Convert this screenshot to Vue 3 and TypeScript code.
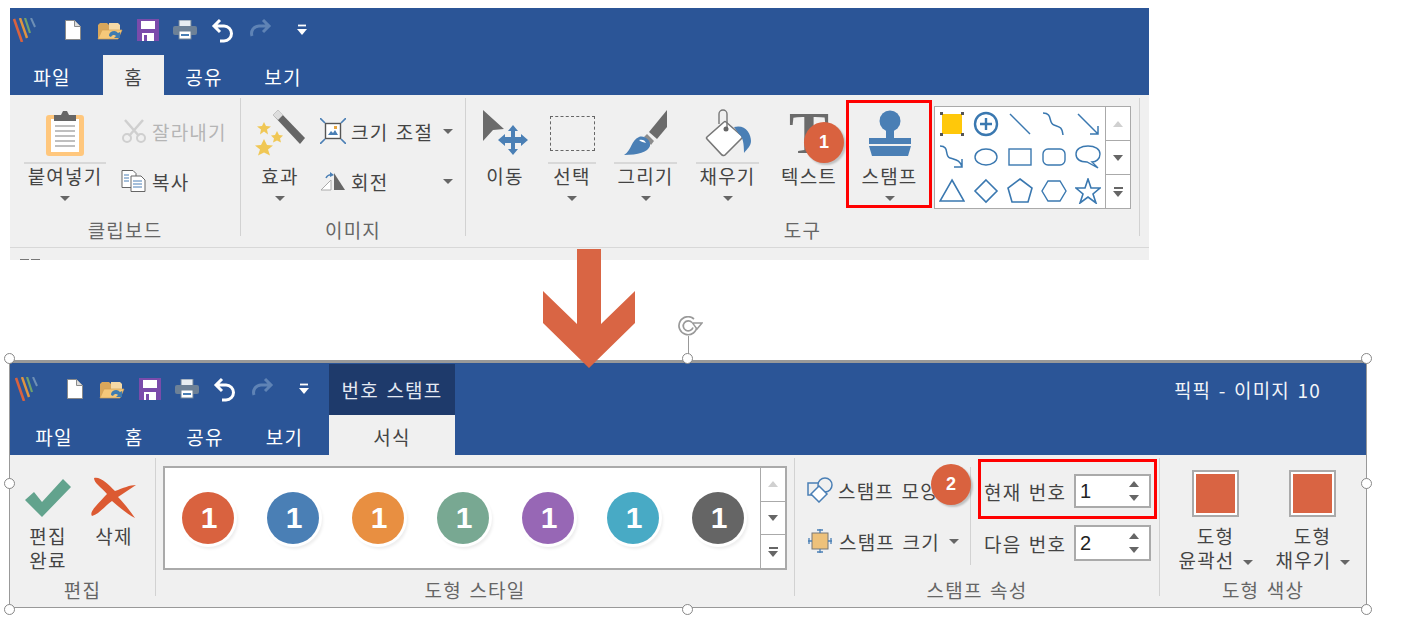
<script setup lang="ts">
const gallery = [
  's-sel', 's-plus', 's-line', 's-curve', 's-arrow',
  's-curvearrow', 's-ellipse', 's-rect', 's-round', 's-callout',
  's-tri', 's-diamond', 's-penta', 's-hexa', 's-star',
];
const stamps = ['#d9623f', '#4a7fb5', '#e88f41', '#78a892', '#9767b5', '#48aac5', '#656565'];
const quick = [
  { id: 'i-new', w: 18, h: 20 },
  { id: 'i-open', w: 26, h: 20 },
  { id: 'i-save', w: 22, h: 22 },
  { id: 'i-print', w: 24, h: 20 },
  { id: 'i-undo', w: 23, h: 25 },
  { id: 'i-redo', w: 23, h: 25 },
];
</script>

<template>
  <div class="page">
    <svg class="defs" width="0" height="0">
      <defs>
        <symbol id="i-logo" viewBox="0 0 24 24">
          <path d="M1 1l8 23" stroke="#d9623f" stroke-width="2.6" fill="none" />
          <path d="M7 0l7 20" stroke="#e0943f" stroke-width="2.4" fill="none" />
          <path d="M12 0l5 15" stroke="#6fa26c" stroke-width="2.2" fill="none" />
          <path d="M18 0l4 9" stroke="#6e8fb5" stroke-width="2" fill="none" />
        </symbol>
        <symbol id="i-new" viewBox="0 0 18 20">
          <path d="M1.5 .5h9l6 6v13h-15z" fill="#fff" stroke="#8a8a8a" />
          <path d="M10.5 .5v6h6" fill="#ddd" stroke="#8a8a8a" />
        </symbol>
        <symbol id="i-open" viewBox="0 0 26 20">
          <path d="M1 19V5l2-2h7l2 2h5v14z" fill="#d9a75b" />
          <path d="M12 3h9l2 2v6H12z" fill="#f5d9a6" />
          <path d="M1 19l4-9h20l-4 9z" fill="#f5c87a" stroke="#d2a055" stroke-width=".7" />
          <path d="M12 16a5 5 0 0 1 9-3l2-1v6h-6l2-2a3 3 0 0 0-5 1z" fill="#3f7cb0" />
        </symbol>
        <symbol id="i-save" viewBox="0 0 22 22">
          <rect width="22" height="22" fill="#7a4bab" />
          <rect x="4" y="2" width="14" height="8" fill="#fff" />
          <rect x="5" y="14" width="12" height="8" fill="#fff" />
          <rect x="7" y="16" width="3" height="6" fill="#7a4bab" />
        </symbol>
        <symbol id="i-print" viewBox="0 0 24 20">
          <rect x="6" y="0" width="12" height="7" fill="#e8edf2" stroke="#6d8197" />
          <rect x="0" y="6" width="24" height="9" rx="2" fill="#6d8197" />
          <rect x="6" y="11" width="12" height="8" fill="#fff" stroke="#6d8197" />
          <path d="M8 15h8" stroke="#4a7fb5" stroke-width="2" />
        </symbol>
        <symbol id="i-undo" viewBox="0 0 23 25">
          <path d="M9 2L3 8l6 6M3 8h10a7.500 7.500 0 0 1 0 15H9" fill="none" stroke="#fff" stroke-width="3" />
        </symbol>
        <symbol id="i-redo" viewBox="0 0 23 25">
          <path d="M14 2l6 6-6 6M20 8H10a7.500 7.500 0 0 0-7 10" fill="none" stroke="#5f83b5" stroke-width="3" />
        </symbol>
        <symbol id="i-drop" viewBox="0 0 10 12">
          <path d="M1 1.500h8" stroke="#fff" stroke-width="1.800" />
          <path d="M0 5h10l-5 6z" fill="#fff" />
        </symbol>
        <symbol id="i-paste" viewBox="0 0 38 46">
          <rect x="0" y="5" width="38" height="41" rx="3" fill="#ffc77d" />
          <rect x="5" y="9" width="28" height="33" fill="#fff" />
          <path d="M9 16h20M9 21h20M9 26h20M9 31h20M9 36h20" stroke="#aaa" stroke-width="1.400" />
          <path d="M8 11V5h7l2-4h4l2 4h7v6z" fill="#666" />
        </symbol>
        <symbol id="i-scissors" viewBox="0 0 24 24">
          <path d="M3 1l14 16M21 1L7 17" stroke="#cfcfcf" stroke-width="2.500" fill="none" />
          <circle cx="5" cy="19" r="4" fill="none" stroke="#cfcfcf" stroke-width="2" />
          <circle cx="19" cy="19" r="4" fill="none" stroke="#cfcfcf" stroke-width="2" />
        </symbol>
        <symbol id="i-copy" viewBox="0 0 25 22">
          <path d="M1 .5h11l3 3v14H1z" fill="#fff" stroke="#666" />
          <path d="M10 6h10l4 4v11.500H10z" fill="#fff" stroke="#666" />
          <path d="M3 5h5M3 8h5M3 11h5M12 11h9M12 14h9M12 17h9" stroke="#4a7fb5" />
        </symbol>
        <symbol id="i-effect" viewBox="0 0 50 48">
          <path d="M18 6l5-5 27 28-5 6z" fill="#666" />
          <path d="M18 6l5-5 5 5-5 5z" fill="#ddd" />
          <path d="M9 13l2 4 5 .5-4 3 1 5-4-3-4 3 1-5-4-3 5-.5zM22 22l2 4 4 .5-3 3 1 4-4-2-4 2 1-4-3-3 4-.5zM9 30l3 6 6 .5-5 4 2 6-6-3-6 3 2-6-5-4 6-.5z" fill="#f0c755" />
        </symbol>
        <symbol id="i-resize" viewBox="0 0 26 26">
          <rect x="5.500" y="5.500" width="15" height="15" fill="#fff" stroke="#555" stroke-width="1.400" />
          <path d="M8 17l3-4 2 2 2-3 3 5z" fill="#4a7fb5" />
          <rect x="14" y="8" width="3" height="3" fill="#e8a53f" />
          <path d="M0 0l5 5M26 0l-5 5M0 26l5-5M26 26l-5-5" stroke="#4a7fb5" stroke-width="1.600" />
        </symbol>
        <symbol id="i-rotate" viewBox="0 0 26 20">
          <path d="M1 19L11 9v10z" fill="#fff" stroke="#aaa" />
          <path d="M14 19V2l11 17z" fill="#666" />
          <path d="M6 7a5 5 0 0 1 6-3" fill="none" stroke="#4a7fb5" stroke-width="1.500" />
          <path d="M10 1l4 3-4 2z" fill="#4a7fb5" />
        </symbol>
        <symbol id="i-move" viewBox="0 0 50 46">
          <path d="M3 0l21 19-11 1-10 11z" fill="#6b6b6b" />
          <path d="M33 15l5 6h-3v6h6v-3l7 6-7 6v-3h-6v6h3l-5 6-5-6h3v-6h-6v3l-7-6 7-6v3h6v-6h-3z" fill="#4a7fb5" />
        </symbol>
        <symbol id="i-brush" viewBox="0 0 44 46">
          <path d="M43 0v17L33 29l-8-7z" fill="#6b6b6b" />
          <path d="M23 24l7 7-3 4-7-8z" fill="#8c8c8c" />
          <path d="M0 45c8-5 7-15 15-18 5-2 12 3 11 9-2 6-12 9-26 9z" fill="#4a7fb5" />
          <path d="M15 30c3-1 6 0 7 3-2-1-5-1-7-3z" fill="#fff" />
        </symbol>
        <symbol id="i-fill" viewBox="0 0 46 48">
          <path d="M19 13L2 28q-1 1 0 2l15 16q2 1 3 0l17-17q1-1 0-2L21 13q-1-1-2 0z" fill="#fff" stroke="#777" stroke-width="1.600" />
          <path d="M14 15V5a4 4 0 0 1 8 0v15" fill="none" stroke="#777" stroke-width="1.400" />
          <circle cx="21" cy="20" r="2.500" fill="#666" />
          <path d="M29 18c11-3 17 6 17 14 0 5-4 8-7 12 0-9-1-16-5-19z" fill="#4a7fb5" />
        </symbol>
        <symbol id="i-stamp" viewBox="0 0 44 46">
          <circle cx="22" cy="11" r="10.500" fill="#4a7fb5" />
          <rect x="18" y="18" width="8" height="12" fill="#4a7fb5" />
          <rect x="1" y="28" width="42" height="6" fill="#4a7fb5" />
          <path d="M1 36h42l-3 10H4z" fill="#4a7fb5" />
        </symbol>
        <symbol id="i-check" viewBox="0 0 46 38">
          <path d="M0 21l9-8 8 10L38 0l8 8-29 30z" fill="#62a38d" />
        </symbol>
        <symbol id="i-cross" viewBox="0 0 46 42">
          <path d="M3 1c6-2 14 6 21 13 8-3 15-6 21-6-6 4-12 8-18 12 6 6 12 14 17 21-8-4-16-11-23-17C14 29 8 37 1 39c-3-4 4-10 15-22C10 10 3 6 3 1z" fill="#dc5a32" />
        </symbol>
        <symbol id="i-shape" viewBox="0 0 26 26">
          <path d="M12 6H1v12h5" fill="none" stroke="#4a7fb5" stroke-width="1.500" />
          <circle cx="18" cy="8" r="7" fill="none" stroke="#4a7fb5" stroke-width="1.500" />
          <path d="M12 9l8 8-8 8-8-8z" fill="#fff" stroke="#4a7fb5" stroke-width="1.500" />
        </symbol>
        <symbol id="i-size" viewBox="0 0 24 24">
          <rect x="4" y="4" width="16" height="16" fill="#eec17a" stroke="#777" />
          <path d="M12 0v4M12 20v4M0 12h4M20 12h4M9 1h6M9 23h6M1 9v6M23 9v6" stroke="#4a7fb5" stroke-width="1.300" />
        </symbol>

        <symbol id="s-sel" viewBox="0 0 26 26">
          <rect x="3" y="3" width="20" height="20" fill="#ffc80a" />
          <path d="M1 1h3v3H1zM22 1h3v3h-3zM1 22h3v3H1zM22 22h3v3h-3z" fill="#555" />
        </symbol>
        <symbol id="s-plus" viewBox="0 0 26 26">
          <circle cx="13" cy="13" r="11" fill="none" stroke="#3a78b0" stroke-width="2.400" />
          <path d="M13 7v12M7 13h12" stroke="#3a78b0" stroke-width="2.400" />
        </symbol>
        <symbol id="s-line" viewBox="0 0 26 26"><path d="M3 3l20 20" stroke="#3a78b0" stroke-width="1.500" /></symbol>
        <symbol id="s-curve" viewBox="0 0 26 26"><path d="M2 2c10 0 5 10 11 12s8 2 9 10" fill="none" stroke="#3a78b0" stroke-width="1.500" /></symbol>
        <symbol id="s-arrow" viewBox="0 0 26 26"><path d="M3 3l20 20M23 15v8h-8" fill="none" stroke="#3a78b0" stroke-width="1.500" /></symbol>
        <symbol id="s-curvearrow" viewBox="0 0 26 26"><path d="M1 2c10 0 4 10 10 12s10 2 12 9M23 15v8h-8" fill="none" stroke="#3a78b0" stroke-width="1.500" /></symbol>
        <symbol id="s-ellipse" viewBox="0 0 26 26"><ellipse cx="13" cy="13" rx="11" ry="8" fill="none" stroke="#3a78b0" stroke-width="1.400" /></symbol>
        <symbol id="s-rect" viewBox="0 0 26 26"><rect x="2" y="5" width="22" height="16" fill="none" stroke="#3a78b0" stroke-width="1.400" /></symbol>
        <symbol id="s-round" viewBox="0 0 26 26"><rect x="2" y="5" width="22" height="16" rx="5" fill="none" stroke="#3a78b0" stroke-width="1.400" /></symbol>
        <symbol id="s-callout" viewBox="0 0 26 26"><path d="M13 2c7 0 12 3 12 8s-4 8-8 8l6 6-11-6C5 18 1 15 1 10s5-8 12-8z" fill="none" stroke="#3a78b0" stroke-width="1.400" /></symbol>
        <symbol id="s-tri" viewBox="0 0 26 26"><path d="M13 2l12 21H1z" fill="none" stroke="#3a78b0" stroke-width="1.600" /></symbol>
        <symbol id="s-diamond" viewBox="0 0 26 26"><path d="M13 2l11 11-11 11L2 13z" fill="none" stroke="#3a78b0" stroke-width="1.600" /></symbol>
        <symbol id="s-penta" viewBox="0 0 26 26"><path d="M13 1l12 9-4 14H5L1 10z" fill="none" stroke="#3a78b0" stroke-width="1.600" /></symbol>
        <symbol id="s-hexa" viewBox="0 0 26 26"><path d="M7 3h12l6 10-6 10H7L1 13z" fill="none" stroke="#3a78b0" stroke-width="1.400" /></symbol>
        <symbol id="s-star" viewBox="0 0 26 26"><path d="M13 1l3 9h9l-7 6 3 9-8-6-8 6 3-9-7-6h9z" fill="none" stroke="#3a78b0" stroke-width="1.600" /></symbol>
      </defs>
    </svg>

    <!-- 위쪽 리본 -->
    <section class="ribbon top">
      <div class="titlebar top-title">
        <div class="qat">
          <svg class="logo" width="24" height="24"><use href="#i-logo" /></svg>
          <span v-for="q in quick" :key="q.id" class="qat-slot">
            <svg :width="q.w" :height="q.h"><use :href="'#' + q.id" /></svg>
          </span>
          <span class="qat-drop"><svg width="10" height="12"><use href="#i-drop" /></svg></span>
        </div>
      </div>
      <div class="tabs">
        <span class="tab t-a">파일</span>
        <span class="tab t-b active">홈</span>
        <span class="tab t-c">공유</span>
        <span class="tab t-d">보기</span>
      </div>
      <div class="body">
        <div class="group g-clip">
          <div class="content">
            <div class="tool w-paste">
              <span class="tool-icon"><svg width="38" height="46"><use href="#i-paste" /></svg></span>
              <span class="rule"></span>
              <span class="tool-label">붙여넣기</span>
              <i class="caret"></i>
            </div>
            <div class="small-col clip-col">
              <div class="small-row disabled">
                <svg class="scissors" width="24" height="24"><use href="#i-scissors" /></svg><span>잘라내기</span>
              </div>
              <div class="small-row">
                <svg width="25" height="22"><use href="#i-copy" /></svg><span>복사</span>
              </div>
            </div>
          </div>
          <div class="group-label">클립보드</div>
        </div>
        <span class="sep"></span>
        <div class="group g-image">
          <div class="content">
            <div class="tool w-effect">
              <span class="tool-icon"><svg width="50" height="48"><use href="#i-effect" /></svg></span>
              <span class="rule none"></span>
              <span class="tool-label">효과</span>
              <i class="caret"></i>
            </div>
            <div class="small-col image-col">
              <div class="small-row">
                <svg width="26" height="26"><use href="#i-resize" /></svg><span>크기 조절</span><i class="caret end"></i>
              </div>
              <div class="small-row">
                <svg width="26" height="20"><use href="#i-rotate" /></svg><span>회전</span><i class="caret end"></i>
              </div>
            </div>
          </div>
          <div class="group-label">이미지</div>
        </div>
        <span class="sep"></span>
        <div class="group g-tools">
          <div class="content">
            <div class="tool w-move">
              <span class="tool-icon"><svg width="50" height="46"><use href="#i-move" /></svg></span>
              <span class="rule none"></span>
              <span class="tool-label">이동</span>
            </div>
            <div class="tool w-select">
              <span class="tool-icon"><span class="dashed"></span></span>
              <span class="rule"></span>
              <span class="tool-label">선택</span>
              <i class="caret"></i>
            </div>
            <div class="tool w-draw">
              <span class="tool-icon"><svg width="44" height="46"><use href="#i-brush" /></svg></span>
              <span class="rule"></span>
              <span class="tool-label">그리기</span>
              <i class="caret"></i>
            </div>
            <div class="tool w-fill">
              <span class="tool-icon"><svg width="46" height="48"><use href="#i-fill" /></svg></span>
              <span class="rule"></span>
              <span class="tool-label">채우기</span>
              <i class="caret"></i>
            </div>
            <div class="tool w-text">
              <span class="tool-icon t-glyph">T</span>
              <span class="rule none"></span>
              <span class="tool-label">텍스트</span>
              <span class="badge one">1</span>
            </div>
            <div class="tool w-stamp">
              <span class="tool-icon"><svg width="44" height="46"><use href="#i-stamp" /></svg></span>
              <span class="rule none"></span>
              <span class="tool-label">스탬프</span>
              <i class="caret"></i>
              <span class="redbox stamp-box"></span>
            </div>
            <div class="shape-gallery">
              <div class="shape-grid">
                <span v-for="s in gallery" :key="s" class="shape-cell">
                  <svg width="26" height="26"><use :href="'#' + s" /></svg>
                </span>
              </div>
              <div class="scroller">
                <span><i class="up"></i></span>
                <span><i class="down"></i></span>
                <span><b></b><i class="down"></i></span>
              </div>
            </div>
          </div>
          <div class="group-label">도구</div>
        </div>
        <span class="sep"></span>
      </div>
      <div class="statusbar"><span></span><span></span></div>
    </section>

    <svg class="big-arrow" width="94" height="122" viewBox="0 0 94 122">
      <path d="M34 2h24v75l34-33v32l-46 45L0 76V44l34 33z" fill="#d96544" />
    </svg>

    <!-- 아래쪽 리본 (선택된 이미지) -->
    <section class="selection">
      <div class="rotate-handle">
        <svg width="30" height="20" viewBox="0 0 30 20">
          <path d="M21 3a9 9 0 1 0 3 7" fill="none" stroke="#999" stroke-width="1.700" />
          <path d="M19 6.500a5 5 0 1 0 1 5" fill="none" stroke="#999" stroke-width="1.700" />
          <path d="M19.500 7h9.500l-5 6z" fill="#fff" stroke="#999" stroke-width="1.400" />
        </svg>
        <span></span>
      </div>
      <i class="handle h-tl"></i><i class="handle h-tc"></i><i class="handle h-tr"></i>
      <i class="handle h-ml"></i><i class="handle h-mr"></i>
      <i class="handle h-bl"></i><i class="handle h-bc"></i><i class="handle h-br"></i>

      <div class="ribbon">
        <div class="titlebar bottom-title">
          <div class="qat second">
            <svg class="logo" width="24" height="24"><use href="#i-logo" /></svg>
            <span v-for="q in quick" :key="q.id" class="qat-slot">
              <svg :width="q.w" :height="q.h"><use :href="'#' + q.id" /></svg>
            </span>
            <span class="qat-drop"><svg width="10" height="12"><use href="#i-drop" /></svg></span>
          </div>
          <div class="context">번호 스탬프</div>
          <div class="doc-title">픽픽 - 이미지 10</div>
        </div>
        <div class="tabs">
          <span class="tab b-a">파일</span>
          <span class="tab b-b">홈</span>
          <span class="tab b-c">공유</span>
          <span class="tab b-d">보기</span>
          <span class="tab b-e active">서식</span>
        </div>
        <div class="body">
          <div class="group g-edit">
            <div class="content">
              <div class="tool tight w-done">
                <span class="edit-icon"><svg width="46" height="38"><use href="#i-check" /></svg></span>
                <span class="tool-label">편집<br />완료</span>
              </div>
              <div class="tool tight w-del">
                <span class="edit-icon"><svg width="46" height="42"><use href="#i-cross" /></svg></span>
                <span class="tool-label">삭제</span>
              </div>
            </div>
            <div class="group-label">편집</div>
          </div>
          <span class="sep"></span>
          <div class="group g-style">
            <div class="content">
              <div class="stamp-gallery">
                <div class="stamp-row">
                  <span v-for="c in stamps" :key="c" class="stamp-cell">
                    <span class="stamp-dot" :style="{ background: c }">1</span>
                  </span>
                </div>
                <div class="scroller">
                  <span><i class="up"></i></span>
                  <span><i class="down"></i></span>
                  <span><b></b><i class="down"></i></span>
                </div>
              </div>
            </div>
            <div class="group-label">도형 스타일</div>
          </div>
          <span class="sep"></span>
          <div class="group g-prop">
            <div class="content">
              <div class="small-col prop-col">
                <div class="small-row">
                  <svg width="26" height="26"><use href="#i-shape" /></svg><span>스탬프 모양</span>
                </div>
                <div class="small-row">
                  <svg class="size-icon" width="24" height="24"><use href="#i-size" /></svg><span>스탬프 크기</span><i class="caret end"></i>
                </div>
              </div>
              <span class="inner-sep"></span>
              <div class="number-col">
                <div class="number-row first">
                  <span class="num-label">현재 번호</span>
                  <div class="spin"><span>1</span><em><i class="up dark"></i><i class="down"></i></em></div>
                </div>
                <div class="number-row second">
                  <span class="num-label">다음 번호</span>
                  <div class="spin"><span>2</span><em><i class="up dark"></i><i class="down"></i></em></div>
                </div>
                <span class="redbox number-box"></span>
              </div>
              <span class="badge two">2</span>
            </div>
            <div class="group-label">스탬프 속성</div>
          </div>
          <span class="sep"></span>
          <div class="group g-color">
            <div class="content">
              <div class="color-item">
                <span class="swatch"></span>
                <span class="tool-label">도형<br />윤곽선<i class="caret inline"></i></span>
              </div>
              <div class="color-item">
                <span class="swatch"></span>
                <span class="tool-label">도형<br />채우기<i class="caret inline"></i></span>
              </div>
            </div>
            <div class="group-label">도형 색상</div>
          </div>
        </div>
      </div>
    </section>
  </div>
</template>

<style scoped>
.page {
  position: relative;
  width: 1417px;
  height: 618px;
  padding: 8px 0 0 10px;
  box-sizing: border-box;
  overflow: hidden;
  background: #fff;
  font-family: "Noto Sans CJK KR", "Liberation Sans", sans-serif;
  font-size: 19px;
  letter-spacing: 1.200px;
  word-spacing: 2px;
  color: #444;
}
.defs {
  position: absolute;
}
.ribbon {
  display: flex;
  flex-direction: column;
  background: #f0f0f0;
}
.ribbon.top {
  width: 1139px;
  height: 252px;
}

/* title bar */
.titlebar {
  display: flex;
  align-items: center;
  background: #2b5597;
}
.top-title {
  height: 47px;
  padding-bottom: 3px;
  box-sizing: border-box;
}
.bottom-title {
  height: 52px;
  align-items: stretch;
}
.qat {
  display: flex;
  align-items: center;
  width: 319px;
  padding-left: 3px;
  box-sizing: border-box;
}
.qat.second {
  padding-left: 5px;
}
.logo {
  margin-right: 17px;
}
.qat-slot {
  display: flex;
  justify-content: center;
  width: 37.5px;
}
.qat-drop {
  display: flex;
  margin-left: 18px;
}
.context {
  display: flex;
  align-items: center;
  justify-content: center;
  width: 126px;
  margin-top: 1px;
  color: #e4e9f2;
  background: #1e3a6b;
}
.doc-title {
  align-self: center;
  margin-left: auto;
  padding-right: 45px;
  color: #f2f4f8;
}

/* tabs */
.tabs {
  display: flex;
  height: 40px;
  background: #2b5597;
}
.tab {
  display: flex;
  align-items: center;
  justify-content: center;
  padding-top: 3px;
  box-sizing: border-box;
  color: #fff;
}
.tab.active {
  color: #444;
  background: #f0f0f0;
}
.t-a { width: 84px; margin-right: 9px; }
.t-b { width: 61px; }
.t-c { width: 80px; }
.t-d { width: 78px; }
.b-a { width: 88px; }
.b-b { width: 72px; }
.b-c { width: 70px; }
.b-d { width: 89px; }
.b-e { width: 126px; }

/* groups */
.body {
  display: flex;
  height: 152px;
  flex: none;
}
.group {
  display: flex;
  flex-direction: column;
  flex: none;
}
.content {
  position: relative;
  display: flex;
  height: 125px;
}
.group-label {
  height: 20px;
  line-height: 20px;
  text-align: center;
  color: #666;
}
.sep {
  flex: none;
  width: 1px;
  margin: 3px 0 11px;
  background: #d2d2d2;
}
.g-clip { width: 230px; }
.g-image { width: 224px; }
.g-tools { width: 673px; }
.g-edit { width: 145px; }
.g-style { width: 638px; }
.g-prop { width: 364px; }
.g-color { width: 206px; }
.g-clip .content { padding-left: 14px; }
.g-image .content { padding-left: 9px; }
.g-tools .content { padding-left: 9px; }

/* big buttons */
.tool {
  position: relative;
  display: flex;
  flex-direction: column;
  align-items: center;
  flex: none;
  padding-top: 12px;
  box-sizing: border-box;
}
.tool-icon {
  display: flex;
  align-items: center;
  justify-content: center;
  height: 52px;
}
.rule {
  align-self: stretch;
  height: 2px;
  margin-top: 3px;
  background: #d8d8d8;
}
.rule.none {
  background: transparent;
}
.tool-label {
  line-height: 24px;
  text-align: center;
  white-space: nowrap;
}
.caret {
  display: block;
  width: 0;
  height: 0;
  margin-top: 8px;
  border: 5px solid transparent;
  border-top: 5px solid #666;
  border-bottom: 0;
}
.caret.end {
  margin: 0 0 0 auto;
}
.prop-col .caret.end {
  margin-right: 6px;
}
.caret.inline {
  display: inline-block;
  margin: 0 0 3px 8px;
}
.w-paste { width: 82px; }
.w-effect { width: 60px; }
.w-move { width: 60px; }
.w-select { width: 48px; margin-left: 13px; }
.w-draw { width: 63px; margin-left: 18px; }
.w-fill { width: 63px; margin-left: 19px; }
.w-text { width: 60px; margin-left: 20px; }
.w-stamp { width: 85px; margin-left: 8px; }
.dashed {
  width: 43px;
  height: 33px;
  border: 1px dashed #666;
}
.t-glyph {
  font-family: "Liberation Serif", serif;
  font-size: 60px;
  line-height: 50px;
  font-weight: 700;
  letter-spacing: 0;
  color: #6b6b6b;
}

/* small buttons */
.small-col {
  display: flex;
  flex-direction: column;
  gap: 20px;
  padding-top: 21px;
}
.small-row {
  display: flex;
  align-items: center;
  gap: 5px;
  height: 30px;
  white-space: nowrap;
}
.small-row.disabled {
  color: #b5b5b5;
}
.clip-col { margin-left: 15px; }
.clip-col .small-row { gap: 6px; }
.scissors { margin-left: 1px; }
.size-icon { margin: 0 2px 0 1px; }
.image-col { width: 133px; margin-left: 10px; }
.prop-col { width: 158px; }

/* shape gallery */
.shape-gallery {
  display: flex;
  width: 197px;
  height: 103px;
  margin: 11px 0 0 2px;
  border: 1px solid #aaa;
  box-sizing: border-box;
  background: #fff;
}
.shape-grid {
  display: grid;
  grid-template-columns: repeat(5, 1fr);
  flex: 1;
}
.shape-cell {
  display: flex;
  align-items: center;
  justify-content: center;
}
.scroller {
  display: flex;
  flex-direction: column;
  flex: none;
  width: 24px;
  border-left: 1px solid #aaa;
}
.scroller span {
  display: flex;
  flex: 1;
  flex-direction: column;
  align-items: center;
  justify-content: center;
  gap: 2px;
}
.scroller span + span {
  border-top: 1px solid #aaa;
}
.scroller b {
  width: 9px;
  height: 2px;
  background: #666;
}
.up, .down {
  display: block;
  width: 0;
  height: 0;
  border-left: 5px solid transparent;
  border-right: 5px solid transparent;
}
.up {
  border-bottom: 6px solid #d0d0d0;
}
.up.dark {
  border-bottom-color: #666;
}
.down {
  border-top: 6px solid #666;
}

/* annotations */
.badge {
  position: absolute;
  display: flex;
  align-items: center;
  justify-content: center;
  width: 40px;
  height: 41px;
  border-radius: 50%;
  font-family: "Liberation Sans", sans-serif;
  font-size: 18px;
  font-weight: 700;
  letter-spacing: 0;
  color: #fff;
  background: #d9623f;
  box-shadow: 2px 2px 2px rgba(0, 0, 0, .2);
}
.badge.one {
  top: 27px;
  left: 25px;
}
.badge.two {
  top: 9px;
  left: 136px;
}
.redbox {
  position: absolute;
  border: 3px solid #f00;
  box-sizing: border-box;
  pointer-events: none;
}
.stamp-box {
  inset: 5px 0 auto -1px;
  height: 108px;
}
.number-box {
  top: 4px;
  left: -6px;
  width: 179px;
  height: 60px;
}
.big-arrow {
  position: absolute;
  top: 247px;
  left: 543px;
  z-index: 3;
}

/* selection frame */
.selection {
  position: relative;
  width: 1358px;
  height: 248px;
  margin: 100px 0 0 -1px;
  border: 1px solid #999;
  border-top-width: 3px;
  box-sizing: border-box;
}
.handle {
  position: absolute;
  z-index: 2;
  width: 9px;
  height: 9px;
  border: 1.500px solid #888;
  border-radius: 50%;
  background: #fff;
}
.h-tl { top: -10px; left: -6px; }
.h-tc { top: -10px; left: 672px; }
.h-tr { top: -10px; right: -6px; }
.h-ml { top: 115px; left: -6px; }
.h-mr { top: 115px; right: -6px; }
.h-bl { bottom: -8px; left: -6px; }
.h-bc { bottom: -8px; left: 672px; }
.h-br { bottom: -8px; right: -6px; }
.rotate-handle {
  position: absolute;
  top: -47px;
  left: 663px;
  display: flex;
  flex-direction: column;
  align-items: center;
  width: 30px;
}
.rotate-handle svg {
  flex: none;
}
.rotate-handle span {
  width: 1px;
  height: 20px;
  background: #999;
}

/* lower ribbon */
.g-edit .content { padding-left: 8px; }
.tool.tight { padding-top: 16px; }
.edit-icon {
  display: flex;
  align-items: center;
  justify-content: center;
  height: 53px;
}
.w-done { width: 60px; }
.w-del { width: 60px; margin-left: 6px; }
.stamp-gallery {
  display: flex;
  width: 624px;
  height: 104px;
  margin: 11px 0 0 7px;
  border: 2px solid #aaa;
  box-sizing: border-box;
  background: #fff;
}
.stamp-row {
  display: flex;
  flex: 1;
}
.stamp-cell {
  display: flex;
  flex: 1;
  align-items: center;
  justify-content: center;
}
.stamp-dot {
  display: flex;
  align-items: center;
  justify-content: center;
  width: 52px;
  height: 52px;
  padding-left: 3px;
  box-sizing: border-box;
  border-radius: 50%;
  font-family: "Liberation Sans", sans-serif;
  font-size: 30px;
  font-weight: 700;
  letter-spacing: 0;
  color: #fff;
  box-shadow: 0 0 0 3px #fff, 2px 3px 3px 2px rgba(0, 0, 0, .07);
}
.g-prop .content { padding-left: 12px; }
.prop-col { padding-top: 20px; gap: 21px; }
.inner-sep {
  flex: none;
  width: 1px;
  height: 98px;
  margin: 12px 0 0 5px;
  background: #d2d2d2;
}
.number-col {
  position: relative;
  display: flex;
  flex-direction: column;
  gap: 17px;
  margin-left: 13px;
  padding-top: 19px;
}
.number-row {
  display: flex;
  align-items: center;
}
.number-row.first { height: 34px; }
.number-row.second { height: 36px; }
.num-label {
  width: 90px;
  white-space: nowrap;
}
.spin {
  display: flex;
  align-items: center;
  justify-content: space-between;
  width: 77px;
  height: 100%;
  padding: 0 10px 0 4px;
  border: 2px solid #aaa;
  box-sizing: border-box;
  font-family: "Liberation Sans", sans-serif;
  font-size: 20px;
  letter-spacing: 0;
  color: #222;
  background: #fff;
}
.spin em {
  display: flex;
  flex-direction: column;
  gap: 8px;
}
.g-color .content { padding-left: 7px; }
.color-item {
  display: flex;
  flex-direction: column;
  align-items: center;
  width: 97px;
  padding-top: 15px;
}
.swatch {
  width: 47px;
  height: 47px;
  margin-bottom: 7px;
  border: 2px solid #aaa;
  box-sizing: border-box;
  box-shadow: inset 0 0 0 2px #fff;
  background: #d96443;
}

/* bottom strip */
.statusbar {
  display: flex;
  gap: 2px;
  height: 13px;
  padding: 11px 0 0 10px;
  box-sizing: border-box;
  border-top: 1px solid #d8d8d8;
}
.statusbar span {
  width: 9px;
  height: 1px;
  background: #777;
}
</style>
